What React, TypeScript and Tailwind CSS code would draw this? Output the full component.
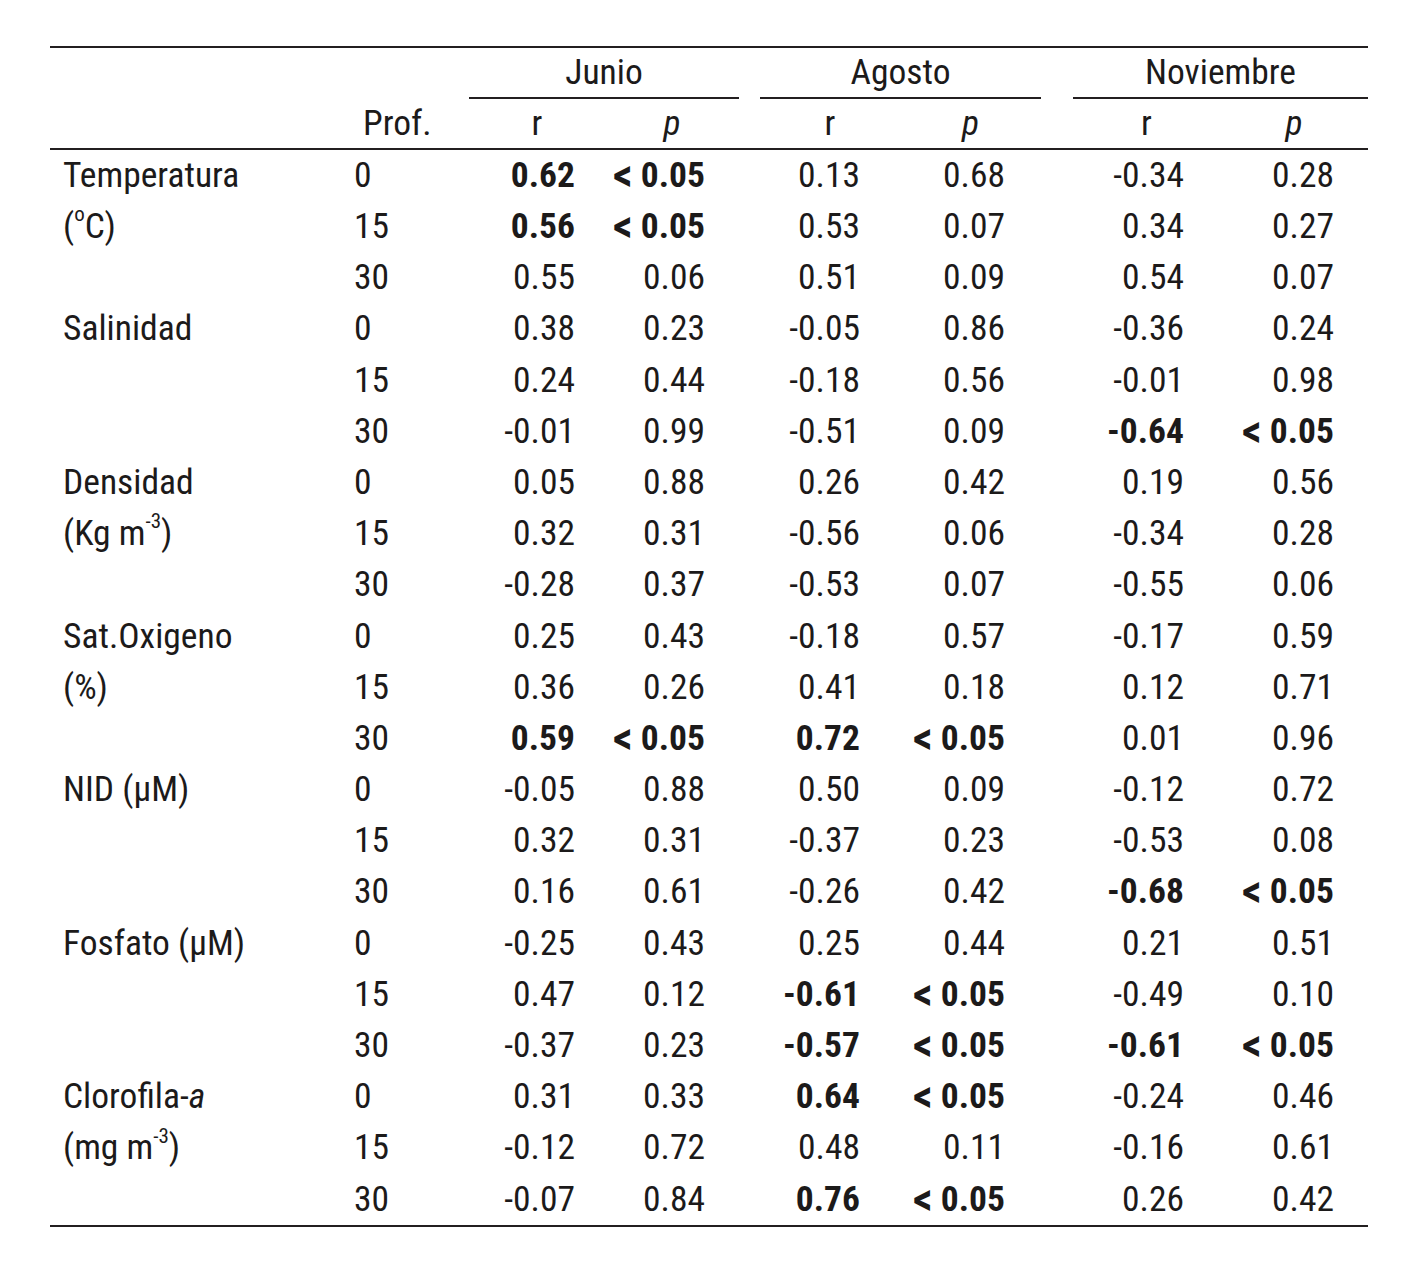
import React from "react";

type Row = { label?: React.ReactNode; prof: string; v: string[] };

const grid =
  "grid grid-cols-[290px_129px_136px_134px_21px_140px_141px_32px_147px_148px]";

const sup = (s: string) => (
  <span className="text-[21px] relative top-[-12px] leading-none">{s}</span>
);

const rows: Row[] = [
  { label: "Temperatura", prof: "0", v: ["*0.62", "*< 0.05", "0.13", "0.68", "-0.34", "0.28"] },
  { label: <>({sup("o")}C)</>, prof: "15", v: ["*0.56", "*< 0.05", "0.53", "0.07", "0.34", "0.27"] },
  { prof: "30", v: ["0.55", "0.06", "0.51", "0.09", "0.54", "0.07"] },
  { label: "Salinidad", prof: "0", v: ["0.38", "0.23", "-0.05", "0.86", "-0.36", "0.24"] },
  { prof: "15", v: ["0.24", "0.44", "-0.18", "0.56", "-0.01", "0.98"] },
  { prof: "30", v: ["-0.01", "0.99", "-0.51", "0.09", "*-0.64", "*< 0.05"] },
  { label: "Densidad", prof: "0", v: ["0.05", "0.88", "0.26", "0.42", "0.19", "0.56"] },
  { label: <>(Kg m{sup("-3")})</>, prof: "15", v: ["0.32", "0.31", "-0.56", "0.06", "-0.34", "0.28"] },
  { prof: "30", v: ["-0.28", "0.37", "-0.53", "0.07", "-0.55", "0.06"] },
  { label: "Sat.Oxigeno", prof: "0", v: ["0.25", "0.43", "-0.18", "0.57", "-0.17", "0.59"] },
  { label: "(%)", prof: "15", v: ["0.36", "0.26", "0.41", "0.18", "0.12", "0.71"] },
  { prof: "30", v: ["*0.59", "*< 0.05", "*0.72", "*< 0.05", "0.01", "0.96"] },
  { label: "NID (µM)", prof: "0", v: ["-0.05", "0.88", "0.50", "0.09", "-0.12", "0.72"] },
  { prof: "15", v: ["0.32", "0.31", "-0.37", "0.23", "-0.53", "0.08"] },
  { prof: "30", v: ["0.16", "0.61", "-0.26", "0.42", "*-0.68", "*< 0.05"] },
  { label: "Fosfato (µM)", prof: "0", v: ["-0.25", "0.43", "0.25", "0.44", "0.21", "0.51"] },
  { prof: "15", v: ["0.47", "0.12", "*-0.61", "*< 0.05", "-0.49", "0.10"] },
  { prof: "30", v: ["-0.37", "0.23", "*-0.57", "*< 0.05", "*-0.61", "*< 0.05"] },
  { label: <>Clorofila-<i>a</i></>, prof: "0", v: ["0.31", "0.33", "*0.64", "*< 0.05", "-0.24", "0.46"] },
  { label: <>(mg m{sup("-3")})</>, prof: "15", v: ["-0.12", "0.72", "0.48", "0.11", "-0.16", "0.61"] },
  { prof: "30", v: ["-0.07", "0.84", "*0.76", "*< 0.05", "0.26", "0.42"] },
];

const pads = ["pr-[30px]", "pr-[34px]", "pr-[40px]", "pr-[36px]", "pr-[36px]", "pr-[34px]"];

function Cell({ s, pad }: { s: string; pad: string }) {
  const bold = s.startsWith("*");
  const t = bold ? s.slice(1) : s;
  const lt = t.startsWith("< ");
  return (
    <div className={`flex items-center justify-end whitespace-nowrap ${pad} ${bold ? "font-bold" : ""}`}>
      {lt ? (
        <span>
          <span className="text-[44px] leading-[0px] relative top-[3px]">&lt;</span> {t.slice(2)}
        </span>
      ) : (
        t
      )}
    </div>
  );
}

export default function App() {
  return (
    <div
      className="w-[1408px] h-[1272px] bg-white text-[#1c1a1a] text-[35.5px] leading-none font-stretch-condensed"
      style={{ fontFamily: 'Roboto, "Liberation Sans", sans-serif' }}
    >
      <div className="pt-[46px] pl-[50px]">
        <div className="w-[1318px] border-t-2 border-[#231f20]">
          <div className={`${grid} h-[51px]`}>
            <div className="col-span-2" />
            <div className="col-span-2 flex items-center justify-center border-b-2 border-[#231f20]">Junio</div>
            <div />
            <div className="col-span-2 flex items-center justify-center border-b-2 border-[#231f20]">Agosto</div>
            <div />
            <div className="col-span-2 flex items-center justify-center border-b-2 border-[#231f20]">Noviembre</div>
          </div>
          <div className={`${grid} h-[51px] border-b-2 border-[#231f20]`}>
            <div />
            <div className="flex items-center pl-[23px]">Prof.</div>
            <div className="flex items-center justify-center">r</div>
            <div className="flex items-center justify-center italic">p</div>
            <div />
            <div className="flex items-center justify-center">r</div>
            <div className="flex items-center justify-center italic">p</div>
            <div />
            <div className="flex items-center justify-center">r</div>
            <div className="flex items-center justify-center italic">p</div>
          </div>
          <div className="border-b-2 border-[#231f20]">
            {rows.map((r, i) => (
              <div key={i} className={`${grid} h-[51.2px]`}>
                <div className="flex items-center pl-[13px] whitespace-nowrap">{r.label}</div>
                <div className="flex items-center pl-[14px]">{r.prof}</div>
                <Cell s={r.v[0]} pad={pads[0]} />
                <Cell s={r.v[1]} pad={pads[1]} />
                <div />
                <Cell s={r.v[2]} pad={pads[2]} />
                <Cell s={r.v[3]} pad={pads[3]} />
                <div />
                <Cell s={r.v[4]} pad={pads[4]} />
                <Cell s={r.v[5]} pad={pads[5]} />
              </div>
            ))}
          </div>
        </div>
      </div>
    </div>
  );
}
